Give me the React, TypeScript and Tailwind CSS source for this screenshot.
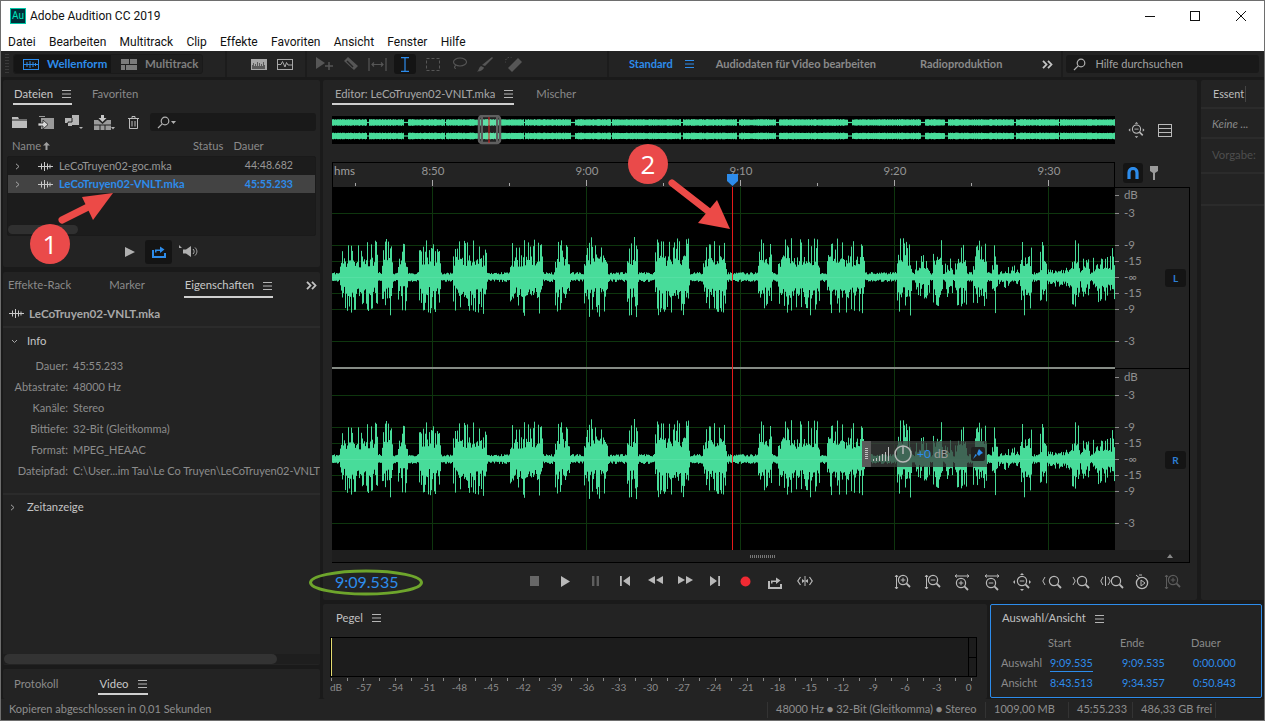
/**
 * Adobe Audition CC 2019 - waveform editor window
 */
import React from 'react';

const BLUE = '#2d8ceb';

// --- waveform data ---------------------------------------------------------

function rng(seed: number) {
    return () => {
        seed = (seed + 0x6d2b79f5) | 0;
        let t = Math.imul(seed ^ (seed >>> 15), 1 | seed);
        t = (t + Math.imul(t ^ (t >>> 7), 61 | t)) ^ t;
        return ((t ^ (t >>> 14)) >>> 0) / 4294967296;
    };
}

// [start px, end px, peak amplitude]
const BURSTS: [number, number, number][] = [
    [340, 378, 37], [382, 393, 39], [398, 408, 35], [419, 441, 37], [453, 487, 39],
    [510, 543, 39], [555, 570, 38], [584, 608, 41], [627, 638, 41], [655, 690, 39], [703, 727, 38],
    [758, 772, 39], [778, 820, 39], [827, 865, 39], [897, 912, 39], [915, 930, 22], [933, 943, 39],
    [945, 953, 22], [955, 967, 37], [973, 987, 37], [992, 998, 37], [999, 1018, 12], [1020, 1032, 41],
    [1040, 1047, 35], [1072, 1080, 39], [1081, 1090, 20], [1093, 1112, 26], [1112, 1115, 39],
];

function wavePath(cy: number, seed: number) {
    const r = rng(seed);
    let d = '';
    for (let x = 0; x < 783; x++) {
        const sx = x + 332;
        const b = BURSTS.find((s) => sx >= s[0] && sx < s[1]);
        let up = 2.5 + r() * 2.5;
        let dn = 2.5 + r() * 2.5;
        if (sx > 1047 && sx < 1072) {
            up += r() * 6;
            dn += r() * 6;
        }
        if (b) {
            const span = Math.min(sx - b[0], b[1] - sx);
            const edge = span < 2 ? 0.75 : 1;
            // mostly a solid body, with thin spikes that reach the peak
            up = b[2] * edge * (r() < 0.34 ? 0.68 + r() * 0.32 : 0.26 + r() * 0.3);
            dn = b[2] * edge * (r() < 0.34 ? 0.68 + r() * 0.32 : 0.26 + r() * 0.3);
        }
        d += `M${x + 0.5} ${(cy - up).toFixed(1)}V${(cy + dn).toFixed(1)}`;
    }
    return d;
}

function overviewPath(cy: number, seed: number) {
    const r = rng(seed);
    let d = '';
    let thin = 0;
    let next = 35;
    for (let x = 0; x < 783; x++) {
        if (x === next) {
            thin = 1 + Math.floor(r() * 4);
            next = x + 22 + Math.floor(r() * 70);
        }
        const h = thin > 0 ? 0.6 : 2.8 + r() * 0.6;
        if (thin > 0) thin--;
        d += `M${x + 0.5} ${(cy - h).toFixed(1)}V${(cy + h).toFixed(1)}`;
    }
    return d;
}

const WAVE_L = wavePath(90, 11);
const WAVE_R = wavePath(272, 11);
const OVER_L = overviewPath(6.5, 5);
const OVER_R = overviewPath(20, 5);

const GRID_Y = [26, 58, 74, 90, 106, 122, 154, 208, 240, 256, 272, 288, 304, 336];
const GRID_X = [100, 254, 408, 562, 716];
const DB_LABELS: [number, string][] = [
    [8, 'dB'], [26, '-3'], [58, '-9'], [74, '-15'], [90, '-∞'], [106, '-15'], [122, '-9'], [154, '-3'],
    [190, 'dB'], [208, '-3'], [240, '-9'], [256, '-15'], [272, '-∞'], [288, '-15'], [304, '-9'], [336, '-3'],
];
const PEGEL = ['-57', '-54', '-51', '-48', '-45', '-42', '-39', '-36', '-33', '-30', '-27', '-24', '-21', '-18', '-15', '-12', '-9', '-6', '-3', '0'];

// --- small icons -----------------------------------------------------------

function Burger({ color = '#b5b5b5' }: { color?: string }) {
    return (
        <svg width="9" height="8" viewBox="0 0 9 8" stroke={color} strokeWidth="1">
            <path d="M0 .5H9M0 4H9M0 7.5H9" />
        </svg>
    );
}

function FileWave({ color = '#c8c8c8' }: { color?: string }) {
    return (
        <svg width="15" height="9" viewBox="0 0 15 9" stroke={color} strokeWidth="1" fill="none">
            <path d="M0 4.5H15M3.5 1.5V7.5M6.5 0V9M9.5 1.5V7.5M12 2.5V6.5" />
        </svg>
    );
}

function Chevron({ open }: { open?: boolean }) {
    return (
        <svg width="7" height="7" viewBox="0 0 7 7" fill="none" stroke="#a8a8a8" strokeWidth="1">
            <path d={open ? 'M1 2l2.5 2.5L6 2' : 'M2 .8L5 3.5 2 6.2'} />
        </svg>
    );
}

function DoubleChevron() {
    return (
        <svg width="11" height="9" viewBox="0 0 11 9" fill="none" stroke="#c4c4c4" strokeWidth="1.8">
            <path d="M1 .8L4.5 4.5 1 8.2M6 .8L9.5 4.5 6 8.2" />
        </svg>
    );
}

function SearchGlass({ color = '#b0b0b0' }: { color?: string }) {
    return (
        <svg width="13" height="13" viewBox="0 0 13 13" fill="none" stroke={color} strokeWidth="1.2">
            <circle cx="8" cy="5" r="3.8" />
            <path d="M5.2 7.8L1 12" />
        </svg>
    );
}

function Ico({ w, h, children, className }: { w: number; h: number; children: React.ReactNode; className?: string }) {
    return (
        <svg width={w} height={h} viewBox={`0 0 ${w} ${h}`} className={className} fill="none">
            {children}
        </svg>
    );
}

const DIM = '#5c5c5c';
const G = '#b9b9b9';

// transport buttons, left to right
const TRANSPORT: React.ReactNode[] = [
    <Ico w={10} h={10} key="stop"><rect width="9" height="10" fill="#676767" /></Ico>,
    <Ico w={11} h={11} key="play"><path d="M1 0L10 5.5 1 11Z" fill={G} /></Ico>,
    <Ico w={9} h={10} key="pause"><path d="M1 0h2.4v10H1zM5.6 0H8v10H5.6z" fill="#5e5e5e" /></Ico>,
    <Ico w={10} h={10} key="prev"><path d="M0 0h1.8v10H0zM10 0v10L3 5z" fill={G} /></Ico>,
    <Ico w={15} h={8} key="rew"><path d="M7 0v8L0 4zM15 0v8L8 4z" fill={G} /></Ico>,
    <Ico w={15} h={8} key="ff"><path d="M0 0v8l7-4zM8 0v8l7-4z" fill={G} /></Ico>,
    <Ico w={10} h={10} key="next"><path d="M8.2 0H10v10H8.2zM0 0v10l7-5z" fill={G} /></Ico>,
    <Ico w={11} h={11} key="rec"><circle cx="5.5" cy="5.5" r="5" fill="#f02a33" /></Ico>,
    <Ico w={14} h={13} key="loop"><path d="M1 5v7h12V8" stroke={G} strokeWidth="2" /><path d="M3 7.5V4.5h5V1.5L12.5 4.5 8 8V6H4.5v1.5z" fill={G} /></Ico>,
    <Ico w={16} h={10} key="skip"><path d="M3.5 1L.8 5l2.7 4M12.5 1l2.7 4-2.7 4" stroke={G} strokeWidth="1.2" /><path d="M8 0v10" stroke={G} /><path d="M5 3v4l3-2zM11 3v4L8 5z" fill={G} /></Ico>,
];

function Mag({ x = 8, y = 7, sign, color = G }: { x?: number; y?: number; sign?: '+' | '-'; color?: string }) {
    return (
        <>
            <circle cx={x} cy={y} r="4.6" stroke={color} strokeWidth="1.2" />
            <path d={`M${x + 3.4} ${y + 3.4}l3.6 3.6`} stroke={color} strokeWidth="1.8" />
            {sign && <path d={`M${x - 2.3} ${y}h4.6`} stroke={color} strokeWidth="1" />}
            {sign === '+' && <path d={`M${x} ${y - 2.3}v4.6`} stroke={color} strokeWidth="1" />}
        </>
    );
}

const V_ARROW = 'M2.5 1v14M1 3l1.5-2L4 3M1 13l1.5 2L4 13';
const H_ARROW = 'M3 2h14M5 .5L3 2l2 1.5M15 .5L17 2l-2 1.5';

const ZOOMS: React.ReactNode[] = [
    <Ico w={17} h={16} key="z1"><path d={V_ARROW} stroke={G} /><Mag x={9} y={6} sign="+" /></Ico>,
    <Ico w={17} h={16} key="z2"><path d={V_ARROW} stroke={G} /><Mag x={9} y={6} sign="-" /></Ico>,
    <Ico w={20} h={17} key="z3"><path d={H_ARROW} stroke={G} /><Mag x={9} y={9} sign="+" /></Ico>,
    <Ico w={20} h={17} key="z4"><path d={H_ARROW} stroke={G} /><Mag x={9} y={9} sign="-" /></Ico>,
    <Ico w={18} h={18} key="z5"><path d="M9 0l2 2H7zM9 18l-2-2h4zM0 9l2-2v4zM18 9l-2 2V7z" fill={G} /><Mag x={9} y={8} sign="-" /></Ico>,
    <Ico w={21} h={14} key="z6"><path d="M3 2L.8 6 3 10" stroke={G} /><Mag x={12} y={6} /></Ico>,
    <Ico w={20} h={14} key="z7"><path d="M1 2l2.2 4L1 10" stroke={G} /><Mag x={10} y={6} /></Ico>,
    <Ico w={25} h={14} key="z8"><path d="M3 2L.8 6 3 10M5.500 1v10M8 2l2.200 4L8 10" stroke={G} /><Mag x={16} y={6} /></Ico>,
    <Ico w={14} h={16} key="z9"><circle cx="7" cy="9" r="5.6" stroke={G} strokeWidth="1.3" /><path d="M6 6v6l4-3zM1 1l3.5 3M4 1H7" stroke={G} /></Ico>,
    <Ico w={17} h={16} key="z10"><path d={V_ARROW} stroke={DIM} /><Mag x={9} y={6} sign="+" color={DIM} /></Ico>,
];

// --- shared bits -----------------------------------------------------------

function Tab({ label, active, menu, className = '' }: { label: string; active?: boolean; menu?: boolean; className?: string }) {
    return (
        <div className={`flex h-full items-center gap-[9px] border-b-2 px-[1px] pt-[5px] text-[11.3px] ${active ? 'border-[#cfcfcf] text-[#c8c8c8]' : 'border-transparent text-[#8a8a8a]'} ${className}`}>
            <span>{label}</span>
            {menu && <Burger />}
        </div>
    );
}

function ToolDivider() {
    return <div className="h-[26px] w-[2px] bg-[#1c1c1c]" />;
}

function FileRow({ name, dur, selected }: { name: string; dur: string; selected?: boolean }) {
    return (
        <div className={`flex h-[18px] items-center ${selected ? 'bg-[#434343] pt-[1px] text-[11.2px] font-bold text-[#2d8ceb]' : 'text-[11px] text-[#979797]'}`}>
            <div className="ml-[6px] w-[24px]"><Chevron /></div>
            <FileWave />
            <span className="ml-[6px] flex-1">{name}</span>
            <span className="mr-[22px] text-[10.600px]">{dur}</span>
        </div>
    );
}

function InfoRow({ label, value }: { label: string; value: string }) {
    return (
        <div className="flex h-[21px] items-center whitespace-nowrap text-[11px]">
            <span className="w-[65px] shrink-0 text-right text-[#8c8c8c]">{label}</span>
            <span className="ml-[5px] text-[#8c8c8c]">{value}</span>
        </div>
    );
}

// --- panels ----------------------------------------------------------------

function TitleBar() {
    return (
        <div className="flex h-[31px] items-center bg-white pb-[1px] pl-[9px] font-['Roboto',sans-serif] text-[12px] text-[#111]">
            <div className="flex h-[16px] w-[16px] items-center justify-center border border-[#00c8a8] bg-[#00303a] text-[10px] leading-none text-[#00e4bb]">Au</div>
            <span className="ml-[4px]">Adobe Audition CC 2019</span>
            <div className="ml-auto flex items-center">
                <svg width="10" height="11" viewBox="0 0 10 11" stroke="#111" className="mr-[35px]"><path d="M0 5.5H10" /></svg>
                <svg width="10" height="10" viewBox="0 0 10 10" stroke="#111" fill="none" className="mr-[36px]"><rect x=".5" y=".5" width="9" height="9" /></svg>
                <svg width="10" height="10" viewBox="0 0 10 10" stroke="#111" className="mr-[18px]"><path d="M0 0L10 10M10 0L0 10" /></svg>
            </div>
        </div>
    );
}

function MenuBar() {
    const items = ['Datei', 'Bearbeiten', 'Multitrack', 'Clip', 'Effekte', 'Favoriten', 'Ansicht', 'Fenster', 'Hilfe'];
    return (
        <div className="flex h-[19px] items-center gap-[13.300px] bg-white pl-[7px] font-['Roboto',sans-serif] text-[12px] text-[#111]">
            {items.map((m) => <span key={m}>{m}</span>)}
        </div>
    );
}

function ToolBar() {
    return (
        <div className="flex h-[26px] items-center whitespace-nowrap bg-[#232323] text-[11px] font-bold [&>*]:shrink-0">
            <div className="ml-[4px] h-[20px] w-[4px] bg-[repeating-linear-gradient(#3a3a3a_0_1px,transparent_1px_3px)]" />
            <div className="ml-[4px] flex h-[20px] w-[190px] rounded-[3px] border border-[#1a1a1a] bg-[#1e1e1e] text-[11.5px]">
                <div className="flex w-[97px] items-center gap-[8px] rounded-l-[3px] bg-[#151515] pl-[9px] text-[#2d8ceb]">
                    <svg width="16" height="11" viewBox="0 0 16 11" fill="none" stroke={BLUE}><rect x=".5" y=".5" width="15" height="10" /><path d="M1 5.5H15M4 3V8M7 2V9M10 3V8M12.5 4V7" /></svg>
                    <span>Wellenform</span>
                </div>
                <div className="flex flex-1 items-center gap-[8px] pl-[10px] text-[#7f7f7f]">
                    <svg width="16" height="11" viewBox="0 0 16 11"><path d="M0 0h8v5H0zM9 0h7v5H9zM0 6h4v5H0zM5 6h11v5H5z" fill="#7a7a7a" /></svg>
                    <span>Multitrack</span>
                </div>
            </div>
            <div className="ml-[22px]"><ToolDivider /></div>
            <svg width="16" height="11" viewBox="0 0 16 11" className="ml-[24px]"><rect width="16" height="11" fill="#a8a8a8" /><path d="M1 10V6h1V4h1v3h1V5h1v2h1V3h1v4h1V4h1v3h1V5h1v2h1V3h1v3h1v4z" fill="#5a5a5a" /></svg>
            <svg width="16" height="11" viewBox="0 0 16 11" fill="none" stroke="#a8a8a8" className="ml-[10px]"><rect x=".5" y=".5" width="15" height="10" /><path d="M1 5.5H4l1.5-3L8 8l1.5-4.5L11 6h4" /></svg>
            <div className="ml-[12px]"><ToolDivider /></div>
            <svg width="21" height="14" viewBox="0 0 21 14" className="ml-[8px]" fill="none"><path d="M1 0l9 6-9 6z" fill="#565656" /><path d="M14 5v8M10 9h8" stroke="#565656" strokeWidth="1.5" /></svg>
            <svg width="16" height="15" viewBox="0 0 16 15" className="ml-[7px]"><path d="M5 0l10 9-4 4L1 4z" fill="#565656" /><path d="M4 4l6 6" stroke="#232323" strokeWidth="1.4" /></svg>
            <svg width="19" height="13" viewBox="0 0 19 13" fill="none" stroke="#565656" strokeWidth="1.2" className="ml-[9px]"><path d="M1 0v13M18 0v13M4 6.5h11M6 4.5L4 6.5l2 2M13 4.5l2 2-2 2" /></svg>
            <div className="ml-[7px] flex h-[20px] w-[22px] items-center justify-center rounded-[3px] bg-[#141414]">
                <svg width="8" height="15" viewBox="0 0 8 15" fill="none" stroke={BLUE} strokeWidth="1.2"><path d="M0 .6H8M0 14.4H8M4 .6V14.4" /></svg>
            </div>
            <svg width="14" height="13" viewBox="0 0 14 13" fill="none" stroke="#565656" strokeDasharray="3 2" className="ml-[10px]"><rect x=".5" y=".5" width="13" height="12" /></svg>
            <svg width="16" height="14" viewBox="0 0 16 14" fill="none" stroke="#565656" strokeWidth="1.1" className="ml-[11px]"><ellipse cx="9" cy="5" rx="6.5" ry="4" /><path d="M5 8.5c-2 .6-2 3 0 3" /></svg>
            <svg width="16" height="15" viewBox="0 0 16 15" className="ml-[10px]"><path d="M15 0l1 1-8 8-3-1zM4 9l3 1.5C6 14 2 14.500 0 14.500c2-1 1.500-4 4-5.500z" fill="#565656" /></svg>
            <svg width="18" height="15" viewBox="0 0 18 15" className="ml-[12px]"><path d="M13 1l4 4L7 15l-4-4z" fill="#565656" /><path d="M7 0a6 6 0 0 0-7 7" stroke="#565656" strokeDasharray="1.500 1.500" fill="none" /></svg>
            <div className="ml-[84px]"><ToolDivider /></div>
            <span className="ml-[20px] text-[#2d8ceb]">Standard</span>
            <div className="ml-[12px]"><Burger color={BLUE} /></div>
            <span className="ml-[22px] text-[#8a8a8a]">Audiodaten für Video bearbeiten</span>
            <span className="ml-[44px] text-[#8a8a8a]">Radioproduktion</span>
            <div className="ml-[40px]"><DoubleChevron /></div>
            <div className="ml-[8px]"><ToolDivider /></div>
            <div className="ml-[3px] flex h-[18px] w-[193px] items-center rounded-[3px] bg-[#191919] pl-[7px] font-normal text-[#a2a2a2]">
                <SearchGlass />
                <span className="ml-[9px] text-[11px]">Hilfe durchsuchen</span>
            </div>
        </div>
    );
}

function FilesPanel() {
    return (
        <div className="flex h-[187px] flex-col rounded-[2px] bg-[#232323]">
            <div className="flex h-[25px] items-stretch gap-[19px] pl-[10px]">
                <Tab label="Dateien" active menu />
                <Tab label="Favoriten" />
            </div>
            <div className="mt-[8px] flex h-[18px] items-center pl-[9px]">
                <svg width="15" height="11" viewBox="0 0 15 11"><path d="M0 0h6l1 2h8v9H0z" fill="#bdbdbd" /><path d="M0 3h15" stroke="#232323" /></svg>
                <svg width="16" height="13" viewBox="0 0 16 13" className="ml-[11px]"><path d="M1 0h6v1H1zM3 2h13v11H3z" fill="#9a9a9a" /><path d="M0 7h5V4l5 4.500-5 4.500v-3H0z" fill="#d8d8d8" stroke="#232323" strokeWidth=".8" /></svg>
                <svg width="18" height="14" viewBox="0 0 18 14" className="ml-[11px]"><path d="M0 3h7V0h7v10H7v1H3V8H0z" fill="#b5b5b5" /><path d="M7 3v4H3v1" stroke="#232323" fill="none" /><path d="M14 12h4l-2 2z" fill="#b5b5b5" /></svg>
                <svg width="21" height="15" viewBox="0 0 21 15" className="ml-[11px]"><path d="M7 0h3v3h2.500L8.500 7 4.500 3H7z" fill="#c8c8c8" /><path d="M0 5h4l4.500 4L13 5h4v10H0z" fill="#9b9b9b" /><path d="M0 10h17M6 10v5M11 10v5" stroke="#232323" /><path d="M17 12h4l-2 2.500z" fill="#b5b5b5" /></svg>
                <svg width="11" height="13" viewBox="0 0 11 13" fill="none" stroke="#bdbdbd" className="ml-[13px]"><path d="M0 2.500h11M4 2.500V.5h3v2M1.500 2.500v10h8v-10M4 5v5.500M7 5v5.500" /></svg>
                <div className="ml-[11px] flex h-[18px] w-[166px] items-center gap-[1px] rounded-[3px] bg-[#191919] pl-[7px]">
                    <SearchGlass />
                    <svg width="5" height="3" viewBox="0 0 5 3"><path d="M0 0h5L2.500 3z" fill="#b0b0b0" /></svg>
                </div>
            </div>
            <div className="mt-[8px] flex h-[14px] items-center text-[11.200px] text-[#8a8a8a]">
                <span className="ml-[9px]">Name</span>
                <svg width="7" height="8" viewBox="0 0 7 8" className="ml-[2px]"><path d="M3.500 0L7 3.500H4.500V8h-2V3.500H0z" fill="#a0a0a0" /></svg>
                <span className="ml-[143px]">Status</span>
                <span className="ml-[10px]">Dauer</span>
            </div>
            <div className="mx-[4px] mt-[3px] flex h-[80px] w-[309px] flex-col rounded-[2px] border border-[#1a1a1a] bg-[#1c1c1c]">
                <FileRow name="LeCoTruyen02-goc.mka" dur="44:48.682" />
                <FileRow name="LeCoTruyen02-VNLT.mka" dur="45:55.233" selected />
                <div className="mt-auto mb-[1px] h-[9px] w-[70px] rounded-[5px] bg-[#303030]" />
            </div>
            <div className="flex flex-1 items-center pl-[122px]">
                <svg width="10" height="10" viewBox="0 0 10 10"><path d="M0 0l10 5-10 5z" fill="#b0b0b0" /></svg>
                <div className="ml-[10px] flex h-[24px] w-[27px] items-center justify-center rounded-[3px] bg-[#141414]">
                    <svg width="14" height="13" viewBox="0 0 14 13" fill="none"><path d="M1 5v7h12V8" stroke={BLUE} strokeWidth="2" /><path d="M3 7.500V4.500h5V1.500L12.500 4.500 8 8V6H4.500v1.500z" fill={BLUE} /></svg>
                </div>
                <svg width="20" height="13" viewBox="0 0 20 13" className="ml-[7px]" fill="none"><path d="M0 0l3 3H0z" fill="#a8a8a8" /><path d="M4 4.500h3L12 1v11L7 8.500H4z" fill="#b0b0b0" /><path d="M14 4c1.500 1.500 1.500 3.500 0 5M16 2.500c2.500 2.500 2.500 5.500 0 8" stroke="#b0b0b0" /></svg>
            </div>
        </div>
    );
}

function PropertiesPanel() {
    return (
        <div className="flex h-[393px] flex-col rounded-[2px] bg-[#232323]">
            <div className="flex h-[26px] items-stretch pl-[4px]">
                <Tab label="Effekte-Rack" className="!pt-[3px]" />
                <Tab label="Marker" className="ml-[36px] !pt-[3px]" />
                <Tab label="Eigenschaften" active menu className="ml-[38px] !pt-[3px]" />
                <div className="ml-auto mr-[3px] flex items-center"><DoubleChevron /></div>
            </div>
            <div className="flex h-[30px] items-center border-b-2 border-[#2b2b2b] pl-[6px] pt-[3px] text-[11.700px] font-bold text-[#a8a8a8]">
                <FileWave />
                <span className="ml-[5px]">LeCoTruyen02-VNLT.mka</span>
            </div>
            <div className="flex h-[26px] items-center pl-[8px] pt-[1px] text-[11.300px] text-[#c4c4c4]">
                <Chevron open />
                <span className="ml-[9px]">Info</span>
            </div>
            <div className="overflow-hidden border-b-2 border-[#2b2b2b] pb-[11px] pt-[2px]">
                <InfoRow label="Dauer:" value="45:55.233" />
                <InfoRow label="Abtastrate:" value="48000 Hz" />
                <InfoRow label="Kanäle:" value="Stereo" />
                <InfoRow label="Bittiefe:" value="32-Bit (Gleitkomma)" />
                <InfoRow label="Format:" value="MPEG_HEAAC" />
                <InfoRow label="Dateipfad:" value="C:\User...im Tau\Le Co Truyen\LeCoTruyen02-VNLT" />
            </div>
            <div className="flex h-[24px] items-center pl-[6px] text-[11.300px] text-[#c4c4c4]">
                <Chevron />
                <span className="ml-[11px]">Zeitanzeige</span>
            </div>
            <div className="mt-auto mb-[1px] h-[10px] bg-[#1e1e1e]">
                <div className="ml-[1px] h-full w-[273px] rounded-[5px] bg-[#333333]" />
            </div>
        </div>
    );
}

function VideoTabs() {
    return (
        <div className="flex h-[30px] items-stretch rounded-[2px] bg-[#232323] pb-[4px] pl-[10px] pt-[1px]">
            <Tab label="Protokoll" />
            <Tab label="Video" active menu className="ml-[39px]" />
        </div>
    );
}

function Overview() {
    return (
        <div className="mt-[11px] flex h-[28px] items-center">
            <svg width="783" height="30" viewBox="0 -1 783 30" className="-my-[1px] block">
                <rect y="0" width="783" height="28" fill="#000" />
                <path d={OVER_L} stroke="#48dc9a" strokeWidth="1" />
                <path d={OVER_R} stroke="#48dc9a" strokeWidth="1" />
                <rect x="147" y="0" width="21" height="27" rx="3" fill="#ffffff22" stroke="#5f5f5f" strokeWidth="2.500" />
                <path d="M150 1V26M165 1V26" stroke="#5f5f5f" strokeWidth="2" />
                <path d="M157 1V27" stroke="#e02020" />
            </svg>
            <svg width="17" height="16" viewBox="0 0 18 18" fill="none" className="ml-[13px]"><path d="M9 0l2 2H7zM9 18l-2-2h4zM0 9l2-2v4zM18 9l-2 2V7z" fill={G} /><Mag x={9} y={8} sign="-" /></svg>
            <svg width="14" height="13" viewBox="0 0 14 13" fill="none" stroke={G} className="ml-[13px]"><rect x=".5" y=".5" width="13" height="12" /><path d="M1 4.500h12M1 8.500h12" /></svg>
        </div>
    );
}

function TimeRuler() {
    return (
        <div className="mt-[18px] flex h-[25px] items-start">
            <svg width="783" height="25" viewBox="0 0 783 25" className="block font-['Lato',sans-serif]">
                <rect width="783" height="25" fill="#232323" />
                <path d="M0 .5H783M.5 0V25M782.500 0V25" stroke="#000" />
                <text x="2" y="13" fontSize="11.500" fill="#a0a0a0">hms</text>
                {['8:50', '9:00', '9:10', '9:20', '9:30'].map((t, i) => (
                    <text key={t} x={GRID_X[i] + 1} y="13" fontSize="11.500" fill="#949494" textAnchor="middle">{t}</text>
                ))}
                {GRID_X.map((x) => <path key={x} d={`M${x + 0.5} 18V24`} stroke="#a8a8a8" />)}
                {[23, 177, 331, 485, 639].map((x) => <path key={x} d={`M${x + 0.5} 21V24`} stroke="#a8a8a8" />)}
                <path d="M395 12h11v7l-5.500 5-5.500-5z" fill={BLUE} />
            </svg>
            <div className="ml-[8px] mt-[1px] flex h-[20px] w-[20px] items-center justify-center rounded-[3px] bg-[#141414]">
                <svg width="12" height="12" viewBox="0 0 12 12" fill="none"><path d="M2 12V5.500a4 4 0 0 1 8 0V12" stroke={BLUE} strokeWidth="3.200" /></svg>
            </div>
            <svg width="8" height="14" viewBox="0 0 8 14" className="ml-[7px] mt-[4px]"><path d="M0 0h8v5L5 7v7H3V7L0 5z" fill="#9a9a9a" /></svg>
        </div>
    );
}

function WaveArea() {
    return (
        <div className="relative flex h-[363px]">
            <svg width="783" height="363" viewBox="0 0 783 363" className="block shrink-0">
                <rect width="783" height="363" fill="#000" />
                {GRID_Y.map((y) => <path key={y} d={`M0 ${y + 0.5}H783`} stroke="#0e360e" />)}
                {GRID_X.map((x) => <path key={x} d={`M${x + 0.5} 0V363`} stroke="#0e360e" />)}
                <path d={WAVE_L} stroke="#48dc9a" strokeWidth="1" />
                <path d={WAVE_R} stroke="#48dc9a" strokeWidth="1" />
                <path d="M0 90.500H783M0 272.500H783" stroke="#5fe3aa" opacity=".6" />
                <path d="M0 181H783" stroke="#858b85" strokeWidth="2" />
                <path d="M400.500 0V363" stroke="#e51a1a" />
            </svg>
            <svg width="75" height="363" viewBox="0 0 75 363" className="block shrink-0 font-['Lato',sans-serif]">
                <rect width="75" height="363" fill="#232323" />
                <path d="M0 .5H75M74.500 0V363M0 181.500H75" stroke="#000" />
                {DB_LABELS.map(([y, t], i) => (
                    <g key={i}>
                        <path d={`M0 ${y + 0.5}H4`} stroke="#8a8a8a" />
                        <text x="9" y={y + 4} fontSize="11.500" fill="#8f8f8f">{t}</text>
                    </g>
                ))}
            </svg>
            <div className="absolute left-[833px] top-[82px] flex h-[18px] w-[21px] items-center justify-center rounded-[3px] bg-[#141414] text-[10px] font-bold text-[#2d7fd6]">L</div>
            <div className="absolute left-[833px] top-[264px] flex h-[18px] w-[21px] items-center justify-center rounded-[3px] bg-[#141414] text-[10px] font-bold text-[#2d7fd6]">R</div>
            {/* gain HUD */}
            <div className="absolute left-[530px] top-[254px] flex h-[26px] w-[125px] items-center bg-[#3c3f3d]/75 text-[12px]">
                <div className="flex h-full w-[9px] items-center justify-center bg-[#5a5a5a]">
                    <div className="h-[12px] w-[3px] bg-[repeating-linear-gradient(#c0c0c0_0_1px,transparent_1px_2px)]" />
                </div>
                <svg width="16" height="14" viewBox="0 0 16 14" className="ml-[2px]" stroke="#c0c0c0"><path d="M.5 14v-2M3.500 14v-3M6.500 14v-5M9.500 14v-7M12.500 14v-9M15.500 14V0" /></svg>
                <svg width="18" height="18" viewBox="0 0 18 18" fill="none" stroke="#b8b8b8" strokeWidth="1.500" className="ml-[5px]"><circle cx="9" cy="9" r="8" /><path d="M9 1v8" /></svg>
                <span className="ml-[5px] text-[#2d8ceb]">+0</span>
                <span className="ml-[3px] text-[#9a9a9a]">dB</span>
                <div className="ml-auto mr-[2px] flex h-[14px] w-[14px] items-center justify-center rounded-[2px] bg-[#202020]">
                    <svg width="10" height="10" viewBox="0 0 10 10"><path d="M6 0l4 4-2 1-2 2-2-2 1-3zM4 6L0 10l2.500-5z" fill={BLUE} /></svg>
                </div>
            </div>
        </div>
    );
}

function Editor() {
    return (
        <div className="flex h-[520px] w-[874px] flex-col rounded-[2px] bg-[#232323] pl-[9px]">
            <div className="flex h-[25px] items-stretch">
                <Tab label="Editor: LeCoTruyen02-VNLT.mka" active menu className="pl-[3px] !text-[#a8a8a8]" />
                <Tab label="Mischer" className="ml-[21px]" />
            </div>
            <Overview />
            <TimeRuler />
            <WaveArea />
            <div className="flex h-[13px] w-[858px] items-center border-b border-r border-black bg-[#1e1e1e]">
                <div className="ml-[418px] h-[3px] w-[25px] bg-[repeating-linear-gradient(90deg,#777_0_1px,transparent_1px_2px)]" />
                <svg width="6" height="4" viewBox="0 0 6 4" className="ml-[392px]"><path d="M3 0l3 4H0z" fill="#888" /></svg>
            </div>
            <div className="flex flex-1 items-center pt-[1px]">
                <span className="ml-[3px] w-[185px] text-[16px] text-[#2d8ceb]">9:09.535</span>
                <div className="flex">
                    {TRANSPORT.map((t, i) => <div key={i} className="flex w-[30px] justify-center">{t}</div>)}
                </div>
                <div className="ml-[67px] flex items-center">
                    {ZOOMS.map((t, i) => <div key={i} className="flex w-[30px] justify-center">{t}</div>)}
                </div>
            </div>
        </div>
    );
}

function EssentialPanel() {
    return (
        <div className="flex h-[520px] w-[64px] flex-col rounded-[2px] bg-[#232323] text-[11.300px]">
            <div className="flex h-[29px] items-center border-b-2 border-[#2b2b2b] pl-[12px] pt-[1px] text-[#bdbdbd]">
                <span className="w-[33px] border-r border-[#444] text-[10.800px]">Essent</span>
            </div>
            <div className="flex h-[30px] items-center border-b-2 border-[#2b2b2b] pl-[11px] pt-[3px] italic text-[#8a8a8a]">Keine ...</div>
            <div className="flex h-[35px] items-center border-b-2 border-[#2b2b2b] pb-[1px] pl-[11px] text-[#4e4e4e]">Vorgabe:</div>
            <div className="h-[32px] border-b-2 border-[#2b2b2b]" />
        </div>
    );
}

function PegelPanel() {
    return (
        <div className="flex h-[95px] w-[664px] flex-col rounded-[2px] bg-[#232323]">
            <div className="flex h-[28px] items-center gap-[9px] pl-[13px] text-[11.300px] text-[#c0c0c0]">
                <span>Pegel</span>
                <Burger />
            </div>
            <div className="ml-[7px] mt-[5px] flex h-[40px] w-[647px] border border-black bg-[#1c1c1c]">
                <div className="h-full w-[1px] bg-[#e4dc70]" />
                <div className="ml-auto flex w-[8px] flex-col border-l border-black">
                    <div className="flex-1 border-b border-black" />
                    <div className="flex-1" />
                </div>
            </div>
            <div className="ml-[8px] mt-[1px] h-[3px] w-[641px] bg-[repeating-linear-gradient(90deg,#8a8a8a_0_1px,transparent_1px_16px)]" />
            <div className="ml-[7px] flex text-[10px] leading-[12px] text-[#8c8c8c]">
                <span className="w-[18px]">dB</span>
                {PEGEL.map((t) => <span key={t} className="w-[31.830px] text-center">{t}</span>)}
            </div>
        </div>
    );
}

function SelectionPanel() {
    const cell = 'pl-[2px] text-[10.800px] text-[#2d8ceb]';
    return (
        <div className="h-[94px] w-[272px] rounded-[2px] border border-[#2d8ceb] bg-[#232323] text-[11.300px]">
            <div className="flex h-[27px] items-center gap-[9px] pl-[11px] text-[#c0c0c0]">
                <span>Auswahl/Ansicht</span>
                <Burger />
            </div>
            <div className="grid grid-cols-[47px_72px_71px_60px] grid-rows-[21px_19px_21px] items-center pl-[10px] pt-[1px] text-[11px]">
                <span />
                <span className="text-[#8a8a8a]">Start</span>
                <span className="text-[#8a8a8a]">Ende</span>
                <span className="text-[#8a8a8a]">Dauer</span>
                <span className="text-[#8a8a8a]">Auswahl</span>
                <span className={`${cell} ml-[2px] w-fit border-b border-[#2d8ceb] !pl-0`}>9:09.535</span>
                <span className={cell}>9:09.535</span>
                <span className={cell}>0:00.000</span>
                <span className="text-[#8a8a8a]">Ansicht</span>
                <span className={cell}>8:43.513</span>
                <span className={cell}>9:34.357</span>
                <span className={cell}>0:50.843</span>
            </div>
        </div>
    );
}

function StatusBar() {
    const seg = 'flex h-[16px] items-center border-l border-[#333] pl-[8px]';
    return (
        <div className="flex h-[21px] items-center bg-[#232323] text-[11px] text-[#8e8e8e]">
            <span className="ml-[8px]">Kopieren abgeschlossen in 0,01 Sekunden</span>
            <div className="ml-auto flex">
                <span className={`${seg} w-[218px]`}>48000 Hz ● 32-Bit (Gleitkomma) ● Stereo</span>
                <span className={`${seg} w-[83px]`}>1009,00 MB</span>
                <span className={`${seg} w-[64px]`}>45:55.233</span>
                <span className={`${seg} w-[83px]`}>486,33 GB frei</span>
                <span className="mr-[48px] h-[16px] border-l border-[#333]" />
            </div>
        </div>
    );
}

// red call-outs and the green ring drawn over the screenshot
function Annotations() {
    return (
        <>
            <svg width="1265" height="721" viewBox="0 0 1265 721" fill="none" className="pointer-events-none absolute -left-[1px] -top-[1px]">
                <path d="M62 220L92 205" stroke="#ec4a47" strokeWidth="7" strokeLinecap="round" />
                <path d="M113 193L82 197 93 220Z" fill="#ec4a47" />
                <path d="M672 183L708 211" stroke="#ec4a47" strokeWidth="7" strokeLinecap="round" />
                <path d="M730 229L717 200 698 223Z" fill="#ec4a47" />
                <ellipse cx="366" cy="582.500" rx="55.500" ry="11.500" stroke="#6ea52c" strokeWidth="3" />
            </svg>
            <div className="absolute left-[29px] top-[223px] flex h-[40px] w-[40px] items-center justify-center rounded-full bg-[#ea4a4a] font-['Open_Sans',sans-serif] text-[26px] leading-none text-white">1</div>
            <div className="absolute left-[627px] top-[143px] flex h-[40px] w-[40px] items-center justify-center rounded-full bg-[#ea4a4a] font-['Open_Sans',sans-serif] text-[26px] leading-none text-white">2</div>
        </>
    );
}

export default function App() {
    return (
        <div className="relative flex h-[721px] w-[1265px] flex-col overflow-hidden border border-[#6e6e6e] bg-[#1a1a1a] font-['Lato',sans-serif]">
            <TitleBar />
            <MenuBar />
            <ToolBar />

            <div className="flex min-h-0 flex-1 gap-[3px] pl-[2px] pt-[3px]">
                {/* Left column */}
                <div className="flex w-[317px] flex-col">
                    <FilesPanel />
                    <div className="h-[5px]" />
                    <PropertiesPanel />
                    <div className="h-[4px]" />
                    <VideoTabs />
                </div>

                {/* Editor and lower panels */}
                <div className="flex flex-col gap-[4px]">
                    <div className="flex gap-[4px]">
                        <Editor />
                        <EssentialPanel />
                    </div>
                    <div className="flex gap-[3px]">
                        <PegelPanel />
                        <SelectionPanel />
                    </div>
                </div>
            </div>

            <StatusBar />
            <Annotations />
        </div>
    );
}
